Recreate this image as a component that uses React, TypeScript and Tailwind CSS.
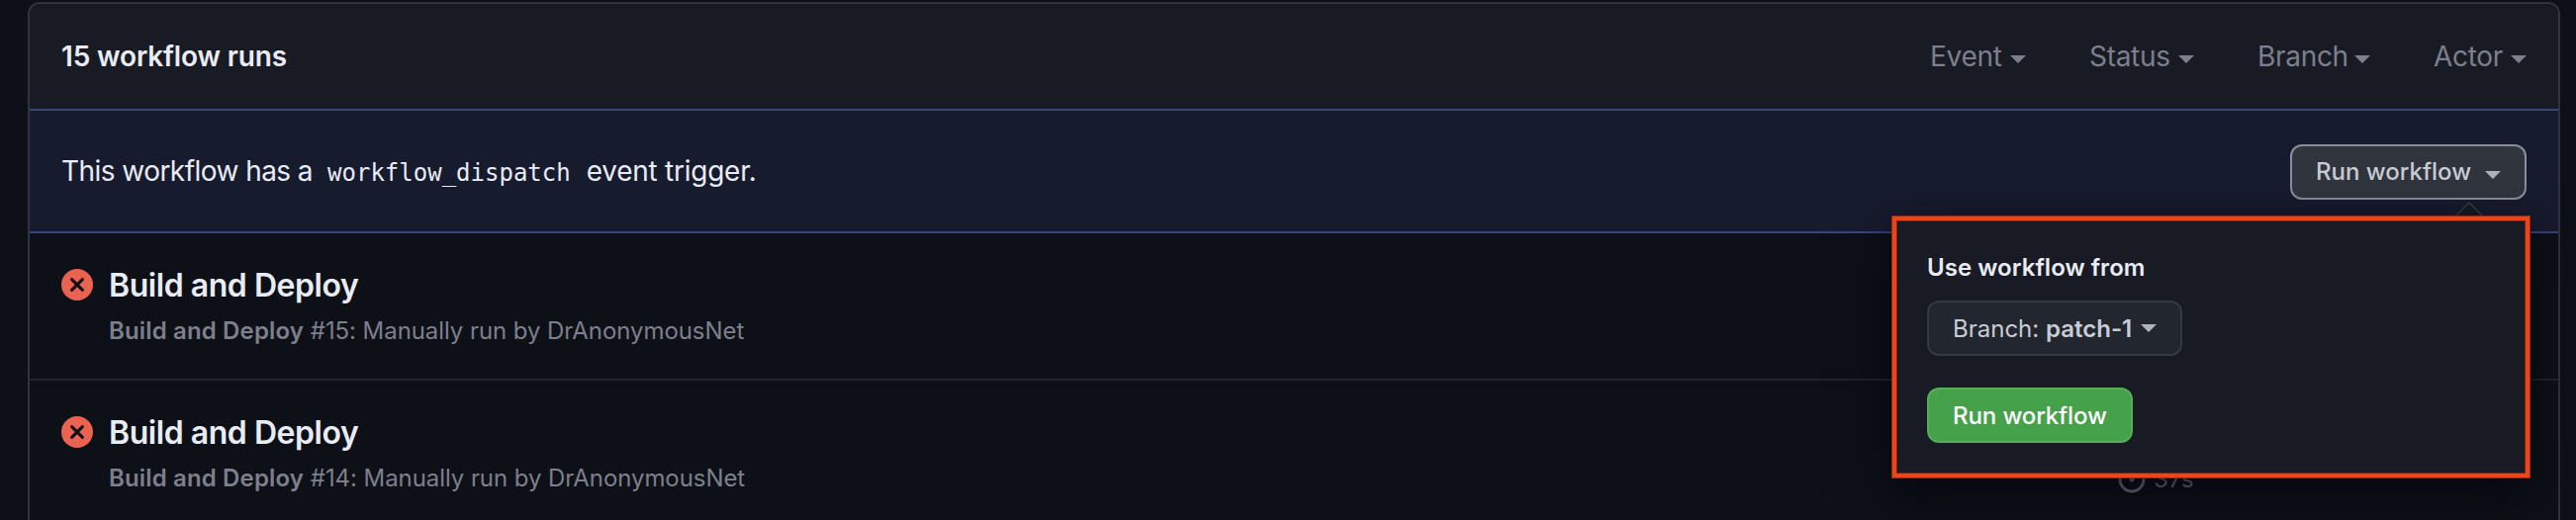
import React from "react";

function Caret({ className }: { className: string }) {
  return (
    <svg width="16" height="8" viewBox="0 0 16 8" className={`block shrink-0 ${className}`} fill="currentColor">
      <path d="M0 0h16L8 8z" />
    </svg>
  );
}

function Filter({ label, width, gap }: { label: string; width: string; gap: string }) {
  return (
    <div className={`flex items-center ${gap}`}>
      <span className={`${width} whitespace-nowrap`}>{label}</span>
      <Caret className="mt-1.5 ml-2" />
    </div>
  );
}

function Run({ id, border }: { id: number; border: string }) {
  return (
    <div className={`flex h-[149px] shrink-0 pl-8 ${border}`}>
      <svg width="32" height="32" viewBox="0 0 32 32" className="mt-9 shrink-0">
        <circle cx="16" cy="16" r="16" fill="#ea6250" />
        <path d="M10.6 10.6l10.8 10.8M21.4 10.6L10.6 21.4" stroke="#0d1117" strokeWidth="3" strokeLinecap="round" />
      </svg>
      <div className="ml-4 flex flex-col pt-[33px]">
        <div className="h-10 text-[32px] leading-10 font-[640] tracking-[-0.45px] text-[#e9ebf5]">Build and Deploy</div>
        <div className="mt-2 text-[24px] leading-9 tracking-[-0.07px] text-[#7d7f8c]">
          <span className="font-[640] tracking-[0.15px]">Build and Deploy</span> #{id}: Manually run by DrAnonymousNet
        </div>
      </div>
    </div>
  );
}

export default function App() {
  return (
    <div className="relative h-[526px] w-[2604px] overflow-hidden bg-[#0d1117] pt-0.5 pl-7 font-['Inter',sans-serif]">
      <div className="flex h-[560px] w-[2560px] flex-col overflow-hidden rounded-t-xl border-2 border-[#30343c]">
        <div className="flex h-[106px] shrink-0 items-center justify-between bg-[#181b23] px-8 text-[28px] leading-[42px]">
          <span className="font-[640] tracking-[-0.15px] text-[#e9ebf5]">15 workflow runs</span>
          <div className="flex tracking-[-0.3px] text-[#7d7f8c]">
            <Filter label="Event" width="w-[73px]" gap="mr-16" />
            <Filter label="Status" width="w-[82px]" gap="mr-16" />
            <Filter label="Branch" width="w-[90px]" gap="mr-16" />
            <Filter label="Actor" width="w-[70px]" gap="mr-0" />
          </div>
        </div>
        <div className="flex h-[126px] shrink-0 items-center justify-between border-y-2 border-[#36457f] bg-[#171b2e] px-8 text-[28px] text-[#e9ebf5]">
          <div className="flex items-baseline">
            <span className="tracking-[-0.55px]">This workflow has a</span>
            <code className="mr-4 ml-[15px] font-['DejaVu_Sans_Mono',monospace] text-[24px]">workflow_dispatch</code>
            <span className="tracking-[-0.25px]">event trigger.</span>
          </div>
          <button className="mt-0.5 flex h-14 w-[239px] items-center rounded-xl border-2 border-[#8b8f9b] bg-[#31353d] pl-6 text-[24px] font-medium text-[#c9ccd6]">
            <span className="w-[155px] whitespace-nowrap">Run workflow</span>
            <Caret className="mt-1.5 ml-4 text-[#b0b3bd]" />
          </button>
        </div>
        <Run id={15} border="border-b-2 border-[#20242c]" />
        <Run id={14} border="" />
      </div>

      <div className="absolute top-[467px] left-[2141px] flex items-center text-[24px] leading-9 text-[#787a87]">
        <svg width="28" height="36" viewBox="0 0 28 36" fill="none" stroke="currentColor" strokeWidth="3">
          <circle cx="14" cy="18" r="12" />
          <path d="M14 12v6" strokeWidth="5" strokeLinecap="round" />
        </svg>
        <span className="ml-2 tracking-[0.3px]">37s</span>
      </div>

      <svg width="28" height="20" viewBox="0 0 28 20" className="absolute top-[204px] left-[2482px]">
        <path d="M-2 17L14 1l16 16" fill="#181b23" stroke="#383c44" strokeWidth="1.5" />
      </svg>
      <div className="absolute top-[218px] left-[1912px] flex h-[266px] w-[646px] border border-[#8f2d17] shadow-[0_16px_48px_rgba(1,4,9,0.75)]">
        <div className="flex grow border-4 border-[#f04418]">
          <div className="flex grow flex-col items-start border border-[#6b2618] bg-[#181b23] pt-[29px] pl-[30px] text-[24px]">
            <div className="leading-9 font-[640] tracking-[0.05px] text-[#e9ebf5]">Use workflow from</div>
            <button className="mt-[15px] flex h-14 w-[258px] items-center rounded-xl border-2 border-[#353941] bg-[#22262e] pt-0.5 pl-6 text-[#c9ccd6]">
              <span className="whitespace-nowrap">Branch: <b className="font-semibold">patch-1</b></span>
              <Caret className="-mt-0.5 ml-[9px] text-[#b0b3bd]" />
            </button>
            <button className="mt-8 flex h-14 w-[208px] items-center rounded-xl border-2 border-[#57ad5a] bg-[#46a24a] pt-0.5 pl-6 font-[550] tracking-[-0.1px] text-white">
              Run workflow
            </button>
          </div>
        </div>
      </div>
    </div>
  );
}
